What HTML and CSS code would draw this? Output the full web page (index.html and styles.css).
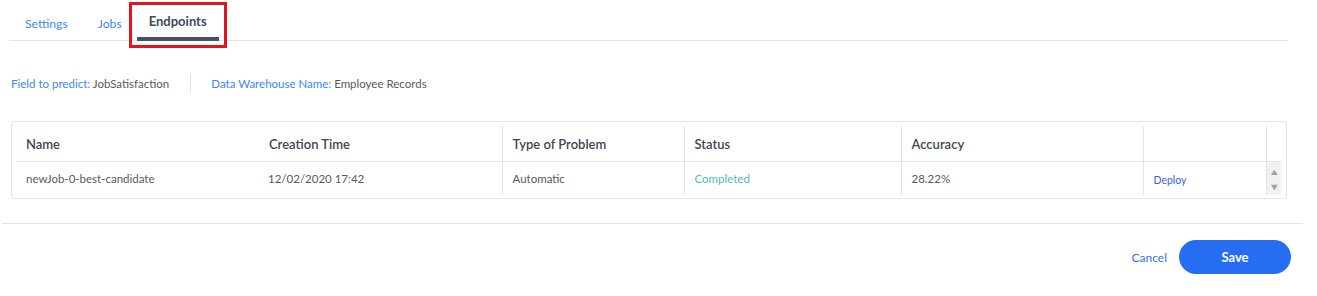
FILE: index.html
```html
<!DOCTYPE html>
<html lang="en">
<head>
  <meta charset="UTF-8">
  <title>Endpoints</title>
  <link rel="stylesheet" href="styles.css">
</head>
<body>

  <div class="tabs">
    <a class="tab">Settings</a>
    <a class="tab">Jobs</a>
    <a class="tab active">Endpoints</a>
  </div>

  <div class="info">
    <span class="info-item"><span class="label">Field to predict:</span> JobSatisfaction</span>
    <span class="sep"></span>
    <span class="info-item"><span class="label">Data Warehouse Name:</span> Employee Records</span>
  </div>

  <div class="table-card">
    <table class="grid">
      <colgroup>
        <col style="width:242px">
        <col style="width:244px">
        <col style="width:182px">
        <col style="width:217px">
        <col style="width:242px">
        <col style="width:123px">
        <col style="width:15px">
      </colgroup>
      <thead>
        <tr>
          <th>Name</th>
          <th>Creation Time</th>
          <th class="bl">Type of Problem</th>
          <th class="bl">Status</th>
          <th class="bl">Accuracy</th>
          <th class="bl"></th>
          <th class="bl"></th>
        </tr>
      </thead>
      <tbody>
        <tr>
          <td>newJob-0-best-candidate</td>
          <td class="small">12/02/2020 17:42</td>
          <td class="bl small">Automatic</td>
          <td class="bl status">Completed</td>
          <td class="bl">28.22%</td>
          <td class="bl"><a class="deploy">Deploy</a></td>
          <td class="scroll"><span class="arrow">&#9650;</span><span class="arrow">&#9660;</span></td>
        </tr>
      </tbody>
    </table>
  </div>

  <div class="footer">
    <a class="cancel">Cancel</a>
    <button class="save">Save</button>
  </div>

</body>
</html>
```

FILE: styles.css
```css
body {
  margin: 0;
  background: #ffffff;
  font-family: Lato, "Liberation Sans", sans-serif;
  color: #4a4f57;
}

.tabs {
  display: flex;
  margin-left: 9px;
  width: 1279px;
  height: 41px;
  border-bottom: 1px solid #e4e4e4;
  box-sizing: border-box;
}

.tab {
  position: relative;
  padding: 16px 15px 0;
  font-size: 12.2px;
  color: #3b88f5;
  cursor: pointer;
}

.tab:first-child {
  padding-left: 16px;
}

.tab.active {
  padding: 13px 12px 0;
  font-size: 13px;
  font-weight: bold;
  color: #3d4a5c;
  border-bottom: 4px solid #45526a;
  height: 41px;
  box-sizing: border-box;
}

/* red annotation box */
.tab.active::after {
  content: "";
  position: absolute;
  left: -8px;
  right: -8px;
  top: 2px;
  bottom: -11px;
  border: 3px solid #e3141b;
}

.info {
  display: flex;
  align-items: center;
  margin: 33px 0 0 11px;
  font-size: 11.5px;
  color: #555a60;
}

.info .label {
  color: #3b88f5;
}

.sep {
  width: 1px;
  height: 18px;
  background: #e2e2e2;
  margin: 0 20px 0 21px;
}

.table-card {
  margin: 29px 0 0 11px;
  width: 1276px;
  border: 1px solid #e2e4e8;
  border-radius: 3px;
  padding: 4px 5px 3px 4px;
  box-sizing: border-box;
}

.grid {
  border-collapse: collapse;
  table-layout: fixed;
  width: 1265px;
}

.grid th {
  height: 35px;
  text-align: left;
  padding: 0 10px;
  font-size: 13px;
  font-weight: 600;
  color: #3f4652;
  border-bottom: 1px solid #e2e4e8;
}

.grid th:nth-child(2) {
  padding-left: 11px;
}

.grid td {
  height: 33px;
  padding: 0 10px;
  font-size: 11.5px;
  color: #555a60;
}

.grid td.small {
  font-size: 11.5px;
}

.grid .bl {
  border-left: 1px solid #e2e4e8;
}

.status {
  color: #4cbcb4 !important;
}

.deploy {
  color: #3d5fdc;
  font-size: 10.5px;
  cursor: pointer;
  position: relative;
  top: 1px;
}

.grid td.scroll {
  padding: 0;
  background: #f1f1f1;
  border-left: 1px solid #e2e4e8;
  text-align: center;
  vertical-align: middle;
}

.arrow {
  display: block;
  font-size: 9px;
  line-height: 15px;
  color: #a3a3a3;
  transform: scaleX(1.3);
}

.footer {
  display: flex;
  justify-content: flex-end;
  align-items: center;
  gap: 12px;
  margin: 24px 0 0 2px;
  width: 1301px;
  border-top: 1px solid #e4e4e4;
  padding: 16px 12px 0 0;
  box-sizing: border-box;
}

.cancel {
  color: #3b6ff0;
  font-size: 12px;
  cursor: pointer;
}

.save {
  width: 112px;
  height: 34px;
  border: none;
  border-radius: 17px;
  background: #266ef1;
  color: #ffffff;
  font-family: Lato, "Liberation Sans", sans-serif;
  font-size: 13px;
  font-weight: bold;
  cursor: pointer;
}
```
